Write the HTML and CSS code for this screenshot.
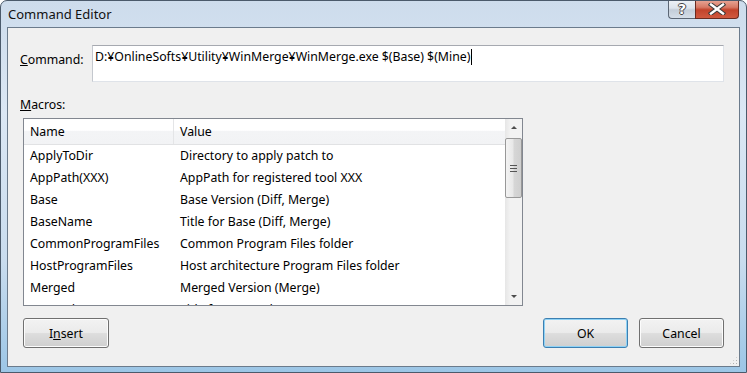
FILE: index.html
```html
<!DOCTYPE html>
<html lang="ja">
<head>
    <meta charset="UTF-8">
    <title>Command Editor</title>
    <link rel="stylesheet" href="styles.css">
</head>
<body>
    <div class="window">
        <div class="titlebar">
            <span class="title">Command Editor</span>
            <div class="caption-buttons">
                <span class="cap help">?</span>
                <span class="cap close">
                    <svg width="20" height="12" viewBox="0 0 20 12">
                        <path d="M4 1.5 L16 10.5 M16 1.5 L4 10.5" stroke="#3b3b3b" stroke-width="4.4" stroke-linecap="square" fill="none"/>
                        <path d="M4 1.5 L16 10.5 M16 1.5 L4 10.5" stroke="#ffffff" stroke-width="2.4" stroke-linecap="square" fill="none"/>
                    </svg>
                </span>
            </div>
        </div>

        <div class="client">
            <div class="command-row">
                <label class="label"><u>C</u>ommand:</label>
                <div class="textbox">D:¥OnlineSofts¥Utility¥WinMerge¥WinMerge.exe $(Base) $(Mine)<span class="caret"></span></div>
            </div>

            <div class="macros-label"><u>M</u>acros:</div>

            <div class="listview">
                <div class="list-main">
                    <div class="list-header">
                        <div class="col-name">Name</div>
                        <div class="col-value">Value</div>
                    </div>
                    <div class="row"><div class="col-name">ApplyToDir</div><div class="col-value">Directory to apply patch to</div></div>
                    <div class="row"><div class="col-name">AppPath(XXX)</div><div class="col-value">AppPath for registered tool XXX</div></div>
                    <div class="row"><div class="col-name">Base</div><div class="col-value">Base Version (Diff, Merge)</div></div>
                    <div class="row"><div class="col-name">BaseName</div><div class="col-value">Title for Base (Diff, Merge)</div></div>
                    <div class="row"><div class="col-name">CommonProgramFiles</div><div class="col-value">Common Program Files folder</div></div>
                    <div class="row"><div class="col-name">HostProgramFiles</div><div class="col-value">Host architecture Program Files folder</div></div>
                    <div class="row"><div class="col-name">Merged</div><div class="col-value">Merged Version (Merge)</div></div>
                    <div class="row"><div class="col-name">MergedName</div><div class="col-value">Title for Merged (Merge)</div></div>
                </div>
                <div class="scrollbar">
                    <div class="arrow"><span class="tri up"></span></div>
                    <div class="track">
                        <div class="thumb"><span class="grip-lines"></span></div>
                    </div>
                    <div class="arrow"><span class="tri down"></span></div>
                </div>
            </div>

            <div class="button-row">
                <button class="button insert">I<u>n</u>sert</button>
                <span class="spacer"></span>
                <button class="button default">OK</button>
                <button class="button">Cancel</button>
            </div>

            <div class="size-grip"></div>
        </div>
    </div>
</body>
</html>
```

FILE: styles.css
```css
* {
    box-sizing: border-box;
}
body {
    margin: 0;
    padding: 0;
    font-family: "Noto Sans", "Noto Sans CJK JP", sans-serif;
    font-size: 12.3px;
    color: #000;
    background: #fff;
}
.window {
    width: 747px;
    height: 373px;
    padding: 0 6px 5px 6px;
    display: flex;
    flex-direction: column;
    border: 1px solid #4b5a6b;
    border-radius: 7px 7px 0 0;
    background: linear-gradient(180deg, #cddcec 0%, #dbe7f4 30%, #c9dcee 70%, #9cc6e6 100%);
    overflow: hidden;
}
.titlebar {
    height: 26px;
    display: flex;
    justify-content: space-between;
    align-items: flex-start;
    flex: none;
}
.title {
    font-size: 13px;
    color: #111;
    padding: 5px 0 0 1px;
    line-height: 16px;
}
.caption-buttons {
    display: flex;
    margin-top: -1px;
    margin-right: 1px;
}
.cap {
    height: 19px;
    display: flex;
    align-items: center;
    justify-content: center;
    border: 1px solid #5b6674;
    border-top: none;
}
.help {
    width: 27px;
    border-right: none;
    border-radius: 0 0 0 4px;
    background: linear-gradient(180deg, #eef2f6 0%, #dde4ec 45%, #c3cdd8 55%, #d5dee8 100%);
    font-family: "DejaVu Sans", sans-serif;
    font-weight: bold;
    font-size: 14px;
    color: #fff;
    text-shadow: 1px 0 0 #444, -1px 0 0 #444, 0 1px 0 #444, 0 -1px 0 #444;
}
.close {
    width: 44px;
    border-radius: 0 0 4px 0;
    border-color: #6a2b20;
    background: linear-gradient(180deg, #e8a898 0%, #d77a66 40%, #c2432b 55%, #d0593f 100%);
}
.client {
    position: relative;
    flex: 1;
    display: flex;
    flex-direction: column;
    padding: 17px 15px 0 12px;
    background: #f0f0f0;
    border: 1px solid #6b7b8c;
}
.command-row {
    display: flex;
    align-items: flex-start;
}
.label {
    width: 72px;
    line-height: 16px;
    padding-top: 7px;
}
.textbox {
    flex: 1;
    height: 37px;
    background: #fff;
    border: 1px solid #dfe3e9;
    border-top-color: #a6a9b0;
    border-left-color: #c4c8ce;
    padding: 3px 0 0 2px;
    line-height: 16px;
    white-space: nowrap;
}
.caret {
    display: inline-block;
    width: 1px;
    height: 16px;
    background: #000;
    vertical-align: top;
    margin-left: 1px;
}
.macros-label {
    margin-top: 15px;
    line-height: 16px;
    margin-bottom: 5px;
}
.listview {
    margin-left: 3px;
    width: 500px;
    height: 188px;
    border: 1px solid #828790;
    background: #fff;
    display: flex;
    overflow: hidden;
}
.list-main {
    flex: 1;
    overflow: hidden;
}
.list-header {
    display: flex;
    height: 26px;
    line-height: 25px;
    background: linear-gradient(180deg, #ffffff 0%, #ffffff 45%, #f3f4f6 50%, #f2f3f5 100%);
    border-bottom: 1px solid #e1e2e4;
}
.list-header .col-name {
    border-right: 1px solid #e4e5e7;
}
.col-name {
    width: 150px;
    padding-left: 6px;
    flex: none;
}
.col-value {
    padding-left: 6px;
    white-space: nowrap;
}
.row {
    display: flex;
    height: 22px;
    line-height: 22px;
}
.scrollbar {
    width: 17px;
    flex: none;
    display: flex;
    flex-direction: column;
    background: linear-gradient(90deg, #e6e6e6 0%, #f2f2f2 30%, #f2f2f2 100%);
}
.arrow {
    height: 17px;
    display: flex;
    align-items: center;
    justify-content: center;
    flex: none;
}
.tri {
    width: 0;
    height: 0;
    border-left: 3px solid transparent;
    border-right: 3px solid transparent;
}
.tri.up {
    border-bottom: 3px solid #4d4d4d;
}
.tri.down {
    border-top: 3px solid #4d4d4d;
}
.track {
    flex: 1;
    padding-top: 2px;
}
.thumb {
    height: 60px;
    border: 1px solid #989898;
    border-radius: 2px;
    background: linear-gradient(90deg, #f3f3f3 0%, #e8e8e8 45%, #d6d6d6 55%, #cfcfcf 100%);
    display: flex;
    align-items: center;
    justify-content: center;
}
.grip-lines {
    width: 7px;
    height: 7px;
    background: linear-gradient(180deg, #555 0, #555 1px, transparent 1px, transparent 3px, #555 3px, #555 4px, transparent 4px, transparent 6px, #555 6px, #555 7px);
}
.button-row {
    display: flex;
    margin-top: 12px;
    gap: 11px;
}
.spacer {
    flex: 1;
}
.button {
    width: 85px;
    height: 30px;
    font-family: inherit;
    font-size: 12.3px;
    color: #000;
    border: 1px solid #707070;
    border-radius: 3px;
    background: linear-gradient(180deg, #f2f2f2 0%, #ebebeb 48%, #dddddd 52%, #cfcfcf 100%);
    box-shadow: inset 0 0 0 1px #fcfcfc;
    padding: 0;
}
.insert {
    width: 86px;
    margin-left: 3px;
}
.default {
    border-color: #3c7fb1;
    box-shadow: inset 0 0 0 1px #8fd2f5;
}
.size-grip {
    position: absolute;
    right: 1px;
    bottom: 1px;
    width: 9px;
    height: 9px;
    background:
        radial-gradient(circle, #b0b0b0 0.8px, transparent 1px) 0 0 / 3px 3px;
    clip-path: polygon(100% 0, 100% 100%, 0 100%);
}
```
